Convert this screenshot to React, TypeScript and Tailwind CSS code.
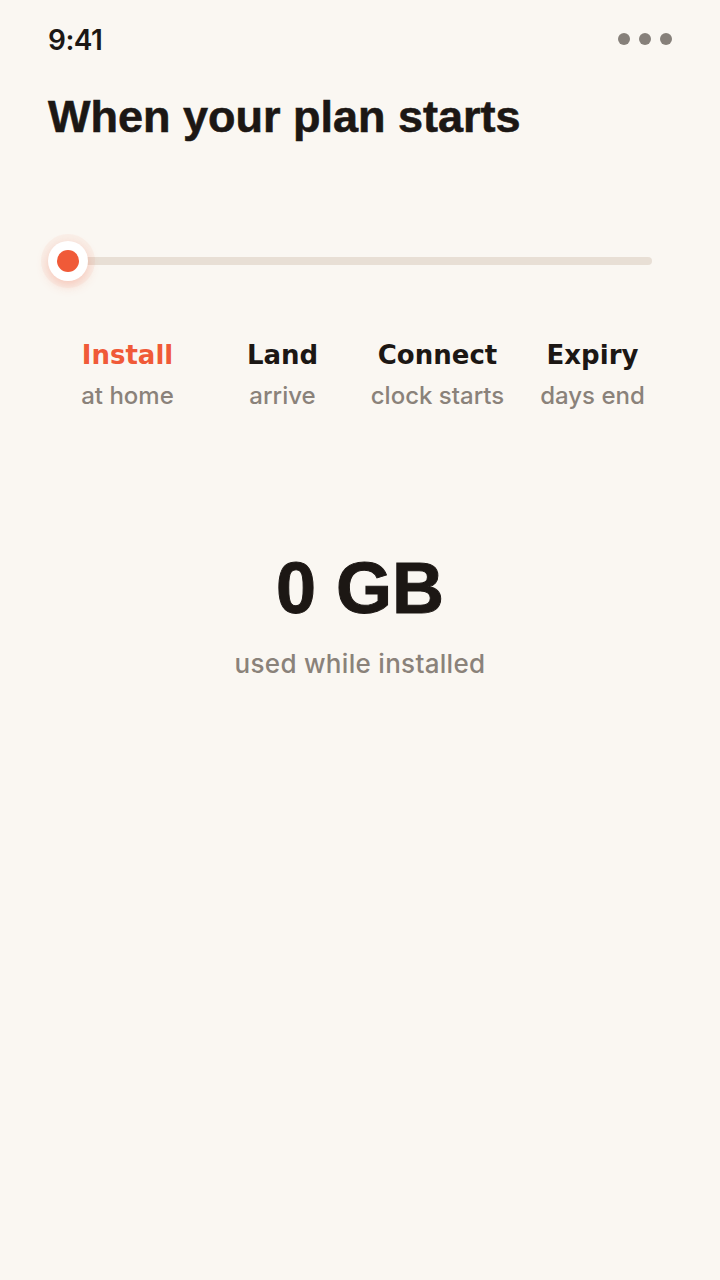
import React from "react";

const stops = [
  { title: "Install", sub: "at home", active: true },
  { title: "Land", sub: "arrive", active: false },
  { title: "Connect", sub: "clock starts", active: false },
  { title: "Expiry", sub: "days end", active: false },
];

const display = { fontFamily: '"Liberation Sans", Arial, sans-serif' };
const label = { fontFamily: '"DejaVu Sans", "Liberation Sans", sans-serif' };

export default function App() {
  return (
    <div
      className="min-h-[1280px] w-full bg-[#faf7f2] text-[#1c1714]"
      style={{ fontFamily: '"Inter", "Liberation Sans", sans-serif' }}
    >
      {/* status bar */}
      <div className="flex items-center justify-between px-12 pt-[24px]">
        <span className="text-[28px] font-semibold tracking-[-0.5px] leading-[32px]">9:41</span>
        <div className="flex items-center gap-[9px] -mt-[2px]">
          <span className="w-3 h-3 rounded-full bg-[#86807a]" />
          <span className="w-3 h-3 rounded-full bg-[#86807a]" />
          <span className="w-3 h-3 rounded-full bg-[#86807a]" />
        </div>
      </div>

      <h1
        className="px-12 mt-[35px] text-[45px] font-bold leading-[52px] [-webkit-text-stroke:0.6px_#1c1714]"
        style={display}
      >
        When your plan starts
      </h1>

      {/* slider */}
      <div className="px-12 mt-[98px]">
        <div className="relative h-10 flex items-center">
          <div className="ml-5 mr-[20px] h-2 flex-1 rounded-full bg-[#e8dfd5]" />
          <div className="absolute left-0 top-0 w-10 h-10 rounded-full bg-white flex items-center justify-center shadow-[0_4px_12px_rgba(240,90,56,0.28),0_0_0_7px_rgba(240,90,56,0.05)]">
            <span className="w-[22px] h-[22px] rounded-full bg-[#f05a38]" />
          </div>
        </div>
      </div>

      {/* stops */}
      <div className="grid grid-cols-4 px-[50px] mt-[58px]">
        {stops.map((s) => (
          <div key={s.title} className="flex flex-col items-center">
            <span
              className={`text-[26px] font-bold leading-[32px] ${
                s.active ? "text-[#f05a38]" : "text-[#1c1714]"
              }`}
              style={label}
            >
              {s.title}
            </span>
            <span className="mt-[11px] text-[24px] font-medium leading-[28px] text-[#8a827a]">
              {s.sub}
            </span>
          </div>
        ))}
      </div>

      {/* usage */}
      <div className="flex flex-col items-center mt-[138px]">
        <span
          className="text-[72px] font-bold leading-[80px] [-webkit-text-stroke:1px_#1c1714]"
          style={display}
        >
          0 GB
        </span>
        <span className="mt-[20px] text-[26px] font-medium leading-[32px] tracking-[0.3px] text-[#8a827a]">
          used while installed
        </span>
      </div>
    </div>
  );
}
